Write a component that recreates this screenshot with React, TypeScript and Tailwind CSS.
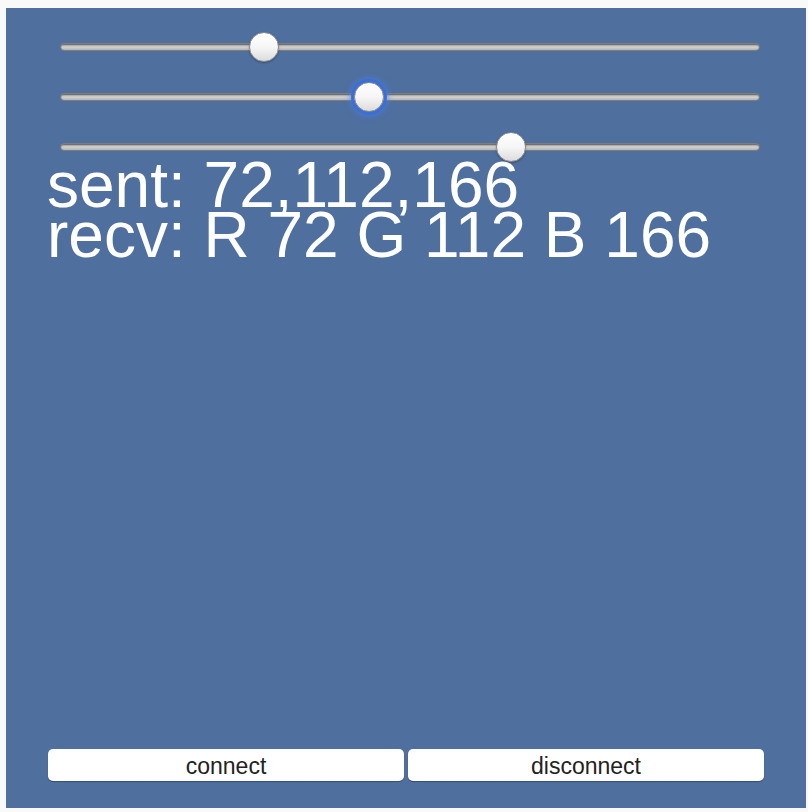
import React from "react";

const values = [72, 112, 166];

function Slider({ value, focused }: { value: number; focused?: boolean }) {
  const left = (value / 255) * (700 - 30);
  return (
    <div className="relative flex h-[50px] w-[700px] items-center">
      <div className="h-[8px] w-full rounded-full border border-[#7d7d7d] bg-gradient-to-b from-[#9a9a9a] via-[#d2d2d2] to-[#b4b4b4] shadow-[inset_0_1px_1px_rgba(0,0,0,0.35)]" />
      <div
        className={`absolute top-[10px] h-[30px] w-[30px] rounded-full border border-[#8a8a8a] bg-gradient-to-b from-[#ffffff] via-[#f6f6f6] to-[#dcdcdc] ${
          focused ? "shadow-[0_0_0_3px_#3b6fd8,0_0_5px_5px_rgba(70,130,240,0.5)]" : "shadow-[0_1px_2px_rgba(0,0,0,0.3)]"
        }`}
        style={{ left }}
      />
    </div>
  );
}

export default function App() {
  return (
    <div className="min-h-[812px] bg-[#f9f9f9] pl-[6px] pt-[8px]">
      <div
        className="flex h-[800px] w-[800px] flex-col bg-[#4f6f9f]"
        style={{ fontFamily: '"Liberation Sans", Arial, sans-serif' }}
      >
        <div className="flex flex-col pl-[54px] pt-[14px]">
          <Slider value={values[0]} />
          <Slider value={values[1]} focused />
          <Slider value={values[2]} />
        </div>

        <div className="-mt-[12px] pl-[41px] text-[64px] leading-[50px] text-white">
          <div>sent: {values.join(",")}</div>
          <div>
            recv: R {values[0]} G {values[1]} B {values[2]}
          </div>
        </div>

        <div className="mt-auto flex gap-[4px] px-[42px] pb-[27px]">
          <button className="h-[32px] flex-1 rounded-[5px] bg-white pt-[2px] text-[23px] leading-none text-[#222] shadow-[0_1px_1px_rgba(0,0,0,0.3)]">
            connect
          </button>
          <button className="h-[32px] flex-1 rounded-[5px] bg-white pt-[2px] text-[23px] leading-none text-[#222] shadow-[0_1px_1px_rgba(0,0,0,0.3)]">
            disconnect
          </button>
        </div>
      </div>
    </div>
  );
}
